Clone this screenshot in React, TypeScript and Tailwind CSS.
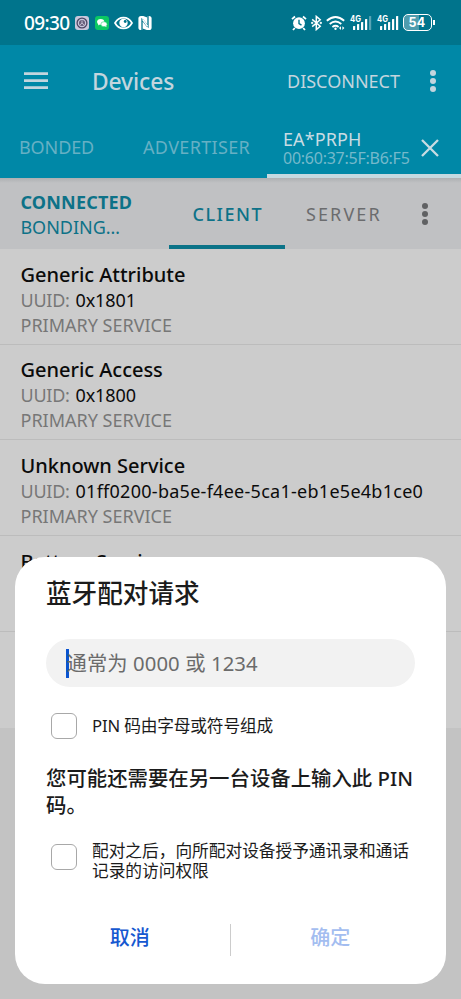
import type { ReactNode } from 'react';

type Service = { name: string; uuid: string; uuidClass: string };

const services: Service[] = [
  { name: 'Generic Attribute', uuid: '0x1801', uuidClass: 'tracking-[-0.1px]' },
  { name: 'Generic Access', uuid: '0x1800', uuidClass: 'tracking-[-0.1px]' },
  { name: 'Unknown Service', uuid: '01ff0200-ba5e-f4ee-5ca1-eb1e5e4b1ce0', uuidClass: 'tracking-[0.27px]' },
  { name: 'Battery Service', uuid: '0x180F', uuidClass: 'tracking-[-0.1px]' },
];

function Signal({ dim }: { dim?: boolean }) {
  return (
    <svg className="overflow-visible" width="22" height="17" viewBox="0 0 22 17" fill="#fff">
      <text x="0" y="8" fontSize="8.5" fontWeight="700" fontFamily="Inter, sans-serif" textLength="11" lengthAdjust="spacingAndGlyphs">4G</text>
      <rect x="3" y="12" width="2.2" height="4" rx=".6" />
      <rect x="7" y="10" width="2.2" height="6" rx=".6" />
      <rect x="11" y="8" width="2.2" height="8" rx=".6" />
      <rect x="15" y="5" width="2.2" height="11" rx=".6" />
      <rect x="19" y="2" width="2.2" height="14" rx=".6" opacity={dim ? 0.35 : 1} />
    </svg>
  );
}

function StatusBar() {
  return (
    <div className="flex h-[45px] items-center bg-[#00748c] pl-[24px] text-white">
      <span className="w-[46px] whitespace-nowrap pt-[2px] text-[19px] leading-[43px] font-medium tracking-[-0.6px]">09:30</span>
      <svg className="ml-[5px]" width="14" height="14" viewBox="0 0 14 14">
        <rect width="14" height="14" rx="3" fill="#c9c7dc" />
        <circle cx="7" cy="7" r="4.9" fill="#c9c7dc" stroke="#4d4664" strokeWidth="1.3" />
        <circle cx="7" cy="7" r="3" fill="#655d7a" />
        <path d="M7 4.6v2.6M5 8.8l2-1.6 2 1.6" stroke="#d9d5e6" strokeWidth=".8" fill="none" />
      </svg>
      <svg className="ml-[6px]" width="14" height="14" viewBox="0 0 14 14">
        <rect width="14" height="14" rx="3" fill="#0cc863" />
        <ellipse cx="5.7" cy="5.8" rx="3.6" ry="2.9" fill="#fff" />
        <path d="M3.5 7.5l-.6 2 2-1z" fill="#fff" />
        <ellipse cx="9" cy="8.2" rx="3.1" ry="2.5" fill="#fff" stroke="#0cc863" strokeWidth=".5" />
        <path d="M10 10l1.4 1.2-.2-1.9z" fill="#fff" />
      </svg>
      <svg className="ml-[5px]" width="19" height="14" viewBox="0 0 19 14">
        <path d="M1 7C5-.2 14-.2 18 7 14 14.2 5 14.2 1 7z" fill="none" stroke="#fff" strokeWidth="1.7" />
        <circle cx="9.5" cy="7" r="4.2" fill="#fff" />
        <circle cx="11.2" cy="5.5" r="1.4" fill="#00748c" />
      </svg>
      <svg className="ml-[5px]" width="14" height="14" viewBox="0 0 14 14">
        <rect x=".4" y="0" width="13.2" height="14" rx="2.6" fill="#fff" />
        <path d="M4 14V3.6l5.6 7.2" fill="none" stroke="#00748c" strokeWidth="1.3" />
        <path d="M10 0v10.4L4.4 3.2" fill="none" stroke="#00748c" strokeWidth="1.3" />
        <path d="M5.2 0h4.2v1.6zM8.8 14H4.6v-1.6z" fill="#00748c" />
        <path d="M4.6 3.4l5 7" stroke="#fff" strokeWidth="1.5" />
      </svg>
      <svg className="ml-[139px]" width="16" height="16" viewBox="0 0 16 16">
        <circle cx="8" cy="8.2" r="5.9" fill="#fff" />
        <path d="M1 4.2l3-2.7M15 4.2l-3-2.7M3.8 13L2 15M12.2 13l1.8 2" stroke="#fff" strokeWidth="1.8" />
        <path d="M8 4.8v3.7l2.5 1.6" fill="none" stroke="#00748c" strokeWidth="1.4" />
      </svg>
      <svg className="ml-[4px]" width="11" height="16" viewBox="0 0 11 16" fill="none" stroke="#fff" strokeWidth="1.5">
        <path d="M1.2 4.4l8 6.8-3.9 3.4V1.4l3.9 3.4-8 6.8" />
        <circle cx="1.2" cy="8" r=".4" /><circle cx="9.8" cy="8" r=".4" />
      </svg>
      <svg className="ml-[4px]" width="20" height="16" viewBox="0 0 20 16" fill="none" stroke="#fff" strokeWidth="1.8">
        <path d="M.8 5.8q8.7-7.6 17.4 0M3.7 9q5.8-5 11.6 0M6.4 12q3.1-2.5 6.2 0" />
        <circle cx="9.5" cy="13.8" r="1.2" fill="#fff" stroke="none" />
        <path d="M13 13l2-1.8V15zM18.4 13l-2-1.8V15z" fill="#fff" stroke="none" />
      </svg>
      <div className="ml-[4px] flex gap-[4.5px]">
        <Signal dim />
        <Signal />
      </div>
      <div className="ml-[4px] flex h-[17px] w-[29px] items-center justify-center rounded-[5px] border-[1.5px] border-white bg-[linear-gradient(90deg,#4f9cae_54%,#00748c_54%)] pt-[1px] font-['Inter',sans-serif] text-[12.5px] leading-none font-bold tracking-[0.3px]">
        54
      </div>
      <div className="ml-[1px] h-[5px] w-[2px] bg-white" />
    </div>
  );
}

function Dots({ className }: { className: string }) {
  return (
    <div className={`flex flex-col gap-[2.5px] ${className}`}>
      <i className="size-[5.5px] rounded-full bg-current" />
      <i className="size-[5.5px] rounded-full bg-current" />
      <i className="size-[5.5px] rounded-full bg-current" />
    </div>
  );
}

function AppBar() {
  return (
    <div className="bg-[#0088a7]">
      <div className="flex h-[72px] items-center pl-[24px] text-[#c3d5de]">
        <svg width="24" height="18" viewBox="0 0 24 18" stroke="currentColor" strokeWidth="2.6">
          <path d="M0 1.6h24M0 8.6h24M0 15.6h24" />
        </svg>
        <span className="ml-[44px] w-[195px] whitespace-nowrap pt-[2px] text-[22.8px] leading-[30px] font-medium tracking-[-0.1px]">Devices</span>
        <span className="w-[143px] whitespace-nowrap text-[18px] leading-[30px]">DISCONNECT</span>
        <Dots className="text-[#c3d5de]" />
      </div>
      <div className="flex h-[61px] whitespace-nowrap">
        <span className="w-[124px] pl-[19px] text-[18px] leading-[61px] tracking-[-0.1px] text-[#66b0c4]">BONDED</span>
        <span className="w-[143px] pl-[19px] text-[18px] leading-[61px] tracking-[0.35px] text-[#66b0c4]">ADVERTISER</span>
        <div className="flex flex-1 items-center border-b-[4px] border-[#c4d9e0] pl-[16px]">
          <div className="w-[138px] pt-[6px]">
            <div className="text-[18px] leading-[19px] tracking-[0.1px] text-[#c9dce3]">EA*PRPH</div>
            <div className="text-[16px] leading-[19px] tracking-[-0.25px] text-[#75b9cb]">00:60:37:5F:B6:F5</div>
          </div>
          <svg className="mt-[4px]" width="18" height="18" viewBox="0 0 18 18" stroke="#c9dce3" strokeWidth="2.3"><path d="M1 1l16 16M17 1L1 17" /></svg>
        </div>
      </div>
    </div>
  );
}

function ConnectionBar() {
  return (
    <div className="flex h-[71px] whitespace-nowrap bg-[linear-gradient(#adb0b2,#c0c1c3_5px)] shadow-[0_1px_1px_#b4b4b5]">
      <div className="w-[169px] pt-[12px] pl-[20.4px] text-[18px] text-[#0d7288]">
        <div className="leading-[25px] font-bold tracking-[0.2px]">CONNECTED</div>
        <div className="leading-[24px]">BONDING…</div>
      </div>
      <div className="w-[116px] border-b-[4px] border-[#0b7388] pl-[23.5px] text-[18px] leading-[72px] font-medium tracking-[1.5px] text-[#0d7288]">CLIENT</div>
      <div className="w-[137px] pl-[21px] text-[18px] leading-[72px] tracking-[2.1px] text-[#6b6c6e]">SERVER</div>
      <Dots className="pt-[25px] text-[#606163]" />
    </div>
  );
}

function ServiceRow({ s }: { s: Service }) {
  return (
    <div className="h-[95.7px] whitespace-nowrap border-b border-[#bcbcbc] pt-[12.7px] pl-[20.5px]">
      <div className="text-[20px] leading-[26px] font-medium tracking-[-0.02px] text-[#0b0b0b]">{s.name}</div>
      <div className="flex text-[18px] leading-[25px]">
        <span className="w-[55px] tracking-[-0.25px] text-[#777]">UUID:</span>
        <span className={`text-[#0b0b0b] ${s.uuidClass}`}>{s.uuid}</span>
      </div>
      <div className="text-[18px] leading-[24px] text-[#777]">PRIMARY SERVICE</div>
    </div>
  );
}

function CheckRow({ className, textClass, children }: { className: string; textClass: string; children: ReactNode }) {
  return (
    <div className={`flex items-center pl-[36px] ${className}`}>
      <div className="mr-[15px] size-[26px] shrink-0 rounded-[6px] border-[1.5px] border-[#a8a8a8]" />
      <div className={`whitespace-nowrap text-[16.7px] leading-[20px] text-[#1b1b1b] ${textClass}`}>{children}</div>
    </div>
  );
}

function PairingDialog() {
  return (
    <div className="absolute top-[557px] left-[15px] h-[427px] w-[431px] rounded-[30px] bg-white">
      <div className="h-[82px] pt-[19px] pl-[31px] text-[25.6px] leading-[36px] font-medium text-[#1b1b1b]">蓝牙配对请求</div>
      <div className="ml-[31px] flex h-[48px] w-[369px] items-center rounded-full bg-[#f2f2f2] pl-[20px]">
        <i className="h-[29px] w-[2.5px] bg-[#0a54d0]" />
        <span className="-ml-[2px] whitespace-nowrap text-[20.3px] leading-[30px] tracking-[0.1px] text-[#6b6b6b]">通常为 0000 或 1234</span>
      </div>
      <CheckRow className="h-[77px]" textClass="tracking-[-0.15px]">PIN 码由字母或符号组成</CheckRow>
      <div className="h-[73px] pt-[1px] pl-[31px] text-[20.4px] leading-[27px] font-medium text-[#1b1b1b]">
        您可能还需要在另一台设备上输入此 PIN<br />码。
      </div>
      <CheckRow className="h-[40px]" textClass="pt-[7px]">配对之后，向所配对设备授予通讯录和通话<br />记录的访问权限</CheckRow>
      <div className="mt-[47px] flex h-[32px] items-center text-[20px] leading-[28px] font-medium">
        <div className="flex-1 pb-[4px] pl-[15px] text-center text-[#1658d0]">取消</div>
        <i className="h-[32px] w-px bg-[#ccc]" />
        <div className="flex-1 pr-[16px] pb-[4px] text-center text-[#a3bdf0]">确定</div>
      </div>
    </div>
  );
}

export default function App() {
  return (
    <div className="relative h-[999px] w-[461px] overflow-hidden bg-[#c3c3c3] font-['Noto_Sans','Noto_Sans_CJK_SC',sans-serif]">
      <StatusBar />
      <AppBar />
      <ConnectionBar />
      <div className="bg-[#ccc]">
        {services.map((s) => <ServiceRow key={s.name} s={s} />)}
        <div className="h-[96px]" />
      </div>
      <PairingDialog />
    </div>
  );
}
